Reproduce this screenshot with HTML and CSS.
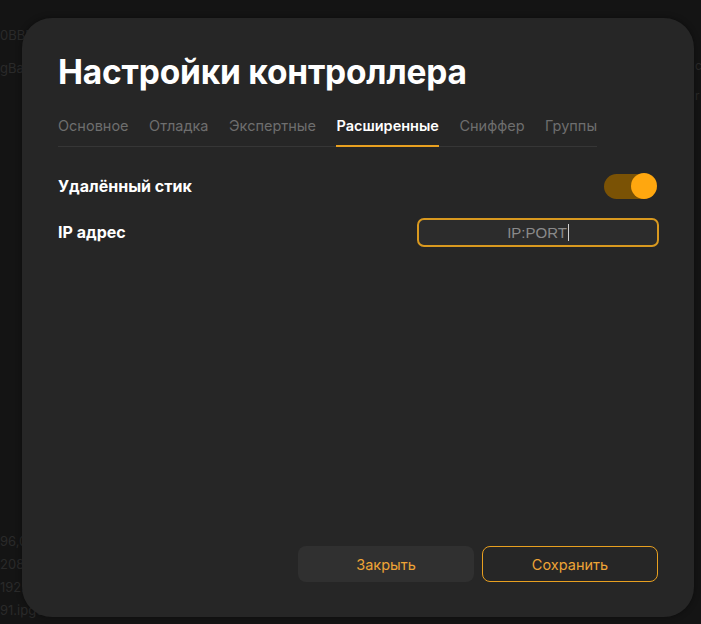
FILE: index.html
```html
<!DOCTYPE html>
<html lang="ru">
<head>
<meta charset="utf-8">
<title>Настройки контроллера</title>
<link rel="stylesheet" href="styles.css">
</head>
<body>
<div class="backdrop">
  <div class="bg-side">
    <div class="bg-line t1">0BBF</div>
    <div class="bg-line t2">gBa</div>
    <div class="bg-spacer"></div>
    <div class="bg-line">96,0</div>
    <div class="bg-line">208</div>
    <div class="bg-line">192.</div>
    <div class="bg-line">91.ipgoto.ru</div>
  </div>
  <div class="bg-right">
    <div class="bg-line">c</div>
    <div class="bg-line">r</div>
  </div>
</div>

<div class="modal">
  <h1 class="title">Настройки контроллера</h1>
  <nav class="tabs">
    <span class="tab">Основное</span>
    <span class="tab">Отладка</span>
    <span class="tab">Экспертные</span>
    <span class="tab active">Расширенные</span>
    <span class="tab">Сниффер</span>
    <span class="tab">Группы</span>
  </nav>
  <div class="rows">
    <div class="row">
      <span class="label">Удалённый стик</span>
      <span class="toggle"><span class="knob"></span></span>
    </div>
    <div class="row">
      <span class="label">IP адрес</span>
      <span class="input"><span class="placeholder">IP:PORT</span><span class="caret"></span></span>
    </div>
  </div>
  <div class="actions">
    <button class="btn btn-close">Закрыть</button>
    <button class="btn btn-save">Сохранить</button>
  </div>
</div>
</body>
</html>
```

FILE: styles.css
```css
* { box-sizing: border-box; }
html, body {
  margin: 0;
  padding: 0;
  width: 701px;
  height: 624px;
  overflow: hidden;
  background: #141414;
  font-family: Inter, "Noto Sans", sans-serif;
}
.backdrop {
  display: flex;
  justify-content: space-between;
  height: 624px;
}
.bg-side {
  display: flex;
  flex-direction: column;
  padding-top: 24px;
  padding-bottom: 2px;
  width: 80px;
  color: #2a2a2a;
  font-size: 13px;
}
.bg-line { height: 23px; line-height: 23px; white-space: nowrap; }
.bg-side .t1 { height: 33px; }
.bg-spacer { flex: 1; }
.bg-right {
  padding-top: 54px;
  color: #2a2a2a;
  font-size: 12px;
  width: 6px;
}
.bg-right .bg-line { height: 30px; }

.modal {
  position: absolute;
  left: 22px;
  top: 18px;
  width: 672px;
  height: 599px;
  background: #262626;
  border-radius: 30px;
  padding: 31px 36px 35px 36px;
  display: flex;
  flex-direction: column;
  box-shadow: 0 0 6px rgba(0,0,0,0.4);
}
.title {
  margin: 0;
  color: #ffffff;
  font-size: 33.5px;
  font-weight: 700;
  line-height: 46px;
  letter-spacing: -0.2px;
}
.tabs {
  display: inline-flex;
  align-self: flex-start;
  gap: 20.5px;
  margin-top: 21px;
  border-bottom: 1px solid #363636;
}
.tab {
  font-size: 14.5px;
  color: #6e6e6e;
  line-height: 20px;
  padding-bottom: 9px;
  margin-bottom: -1px;
  border-bottom: 2px solid transparent;
}
.tab.active {
  color: #ffffff;
  font-weight: 600;
  border-bottom-color: #e8a020;
}
.rows {
  display: flex;
  flex-direction: column;
  gap: 18px;
  margin-top: 25px;
  flex: 1;
}
.row {
  display: flex;
  justify-content: space-between;
  align-items: center;
  height: 28px;
}
.label {
  color: #ffffff;
  font-size: 16px;
  font-weight: 700;
}
.toggle {
  width: 52px;
  height: 25px;
  border-radius: 13px;
  background: #7a5205;
  display: flex;
  justify-content: flex-end;
  align-items: center;
  margin-right: 2px;
}
.knob {
  width: 26px;
  height: 26px;
  border-radius: 50%;
  background: #ffa70f;
  margin-right: -1px;
}
.input {
  width: 242px;
  height: 29px;
  border: 2px solid #d9991f;
  border-radius: 7px;
  background: #2c2c2c;
  display: flex;
  justify-content: center;
  align-items: center;
  margin-right: -1px;
}
.placeholder {
  color: #8a8a8a;
  font-size: 15px;
  font-family: "Liberation Sans", Arial, sans-serif;
}
.caret {
  width: 1px;
  height: 17px;
  background: #d0d0d0;
  margin-left: 1px;
}
.actions {
  display: flex;
  justify-content: flex-end;
  gap: 8px;
}
.btn {
  width: 176px;
  height: 36px;
  border-radius: 8px;
  font-family: Inter, "Noto Sans", sans-serif;
  font-size: 14.5px;
  color: #eda436;
  cursor: pointer;
}
.btn-close {
  background: #303030;
  border: none;
}
.btn-save {
  background: transparent;
  border: 1px solid #e8a020;
}
```
